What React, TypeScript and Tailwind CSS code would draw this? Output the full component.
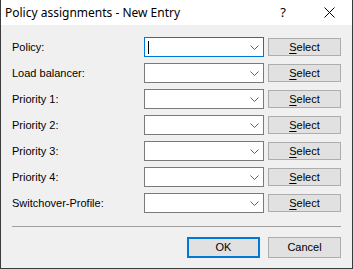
import React from "react";

const labels = [
  "Policy:",
  "Load balancer:",
  "Priority 1:",
  "Priority 2:",
  "Priority 3:",
  "Priority 4:",
  "Switchover-Profile:",
];

function Chevron() {
  return (
    <svg width="9" height="5" viewBox="0 0 9 5" className="block">
      <path d="M0.5 0.5 L4.5 4.5 L8.5 0.5" fill="none" stroke="#606060" strokeWidth="1" />
    </svg>
  );
}

export default function App() {
  return (
    <div
      className="w-[353px] h-[269px] flex flex-col bg-[#f0f0f0] border-x border-b border-[#3c3c3c] text-[11px] text-black overflow-hidden"
      style={{ fontFamily: '"Liberation Sans", Arial, sans-serif' }}
    >
      <div
        className="h-[25px] shrink-0 bg-white flex items-center"
        style={{ fontFamily: '"Noto Sans", "Segoe UI", sans-serif' }}
      >
        <div className="pl-[4px] flex-1 text-[12px] leading-none">Policy assignments - New Entry</div>
        <div className="w-[46px] text-center text-[13px] leading-none">?</div>
        <div className="w-[46px] flex items-center justify-center">
          <svg width="11" height="11" viewBox="0 0 11 11">
            <path d="M0.5 0.5 L10.5 10.5 M10.5 0.5 L0.5 10.5" stroke="#000" strokeWidth="1" />
          </svg>
        </div>
      </div>
      <div className="flex-1 flex flex-col pl-[11px] pr-[11px] pt-[12px]">
        <div className="flex flex-col gap-[6px]">
          {labels.map((l, i) => (
            <div key={l} className="flex items-center h-[20px]">
              <div className="w-[132px] leading-none">{l}</div>
              <div
                className={
                  "w-[120px] h-[20px] bg-white border flex items-center justify-between pl-[2px] pr-[4px] " +
                  (i === 0 ? "border-[#0078d7]" : "border-[#7a7a7a]")
                }
              >
                {i === 0 ? <div className="w-px h-[13px] bg-black ml-[1px]" /> : <div />}
                <Chevron />
              </div>
              <div className="ml-[4px] w-[73px] h-[18px] bg-[#e1e1e1] border border-[#adadad] flex items-center justify-center leading-none">
                <span>
                  <span className="underline underline-offset-2">S</span>elect
                </span>
              </div>
            </div>
          ))}
        </div>
        <div className="mt-[13px] h-px bg-[#a0a0a0]" />
        <div className="mt-[10px] flex justify-end gap-[8px]">
          <div className="w-[73px] h-[21px] bg-[#e1e1e1] border-2 border-[#0078d7] flex items-center justify-center leading-none">
            OK
          </div>
          <div className="w-[73px] h-[21px] bg-[#e1e1e1] border border-[#adadad] flex items-center justify-center leading-none">
            Cancel
          </div>
        </div>
      </div>
    </div>
  );
}
